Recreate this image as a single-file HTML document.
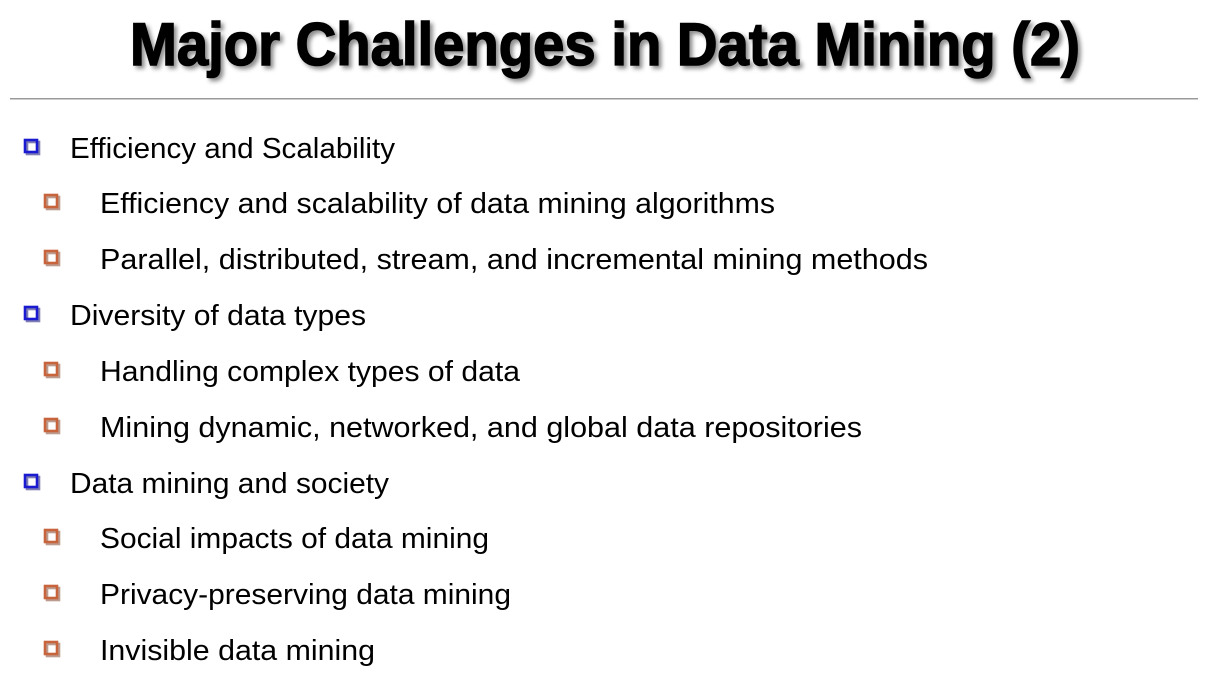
<!DOCTYPE html>
<html><head><meta charset="utf-8"><style>
html,body{margin:0;padding:0;background:#fff;width:1206px;height:690px;overflow:hidden}
</style></head><body>
<svg width="1206" height="690" xmlns="http://www.w3.org/2000/svg">
<defs>
<filter id="sh" x="-10%" y="-10%" width="130%" height="140%"><feDropShadow dx="3" dy="3" stdDeviation="2" flood-color="#000" flood-opacity="0.45"/></filter>
</defs>
<text x="130" y="65" font-family="Liberation Sans, sans-serif" font-weight="bold" font-size="60" textLength="950" lengthAdjust="spacingAndGlyphs" fill="#000" filter="url(#sh)" stroke="#000" stroke-width="1.5">Major Challenges in Data Mining (2)</text>
<rect x="10" y="98" width="1188" height="1.5" fill="#9a9a9a"/>
<g fill="none" stroke-width="2.6">
<g stroke="#00006a" stroke-opacity="0.5">
<rect x="27" y="142" width="12" height="12"/><rect x="27" y="309" width="12" height="12"/><rect x="27" y="477" width="12" height="12"/>
</g>
<g stroke="#1a1ad0">
<rect x="25" y="140" width="12" height="12"/><rect x="25" y="307" width="12" height="12"/><rect x="25" y="475" width="12" height="12"/>
</g>
<g stroke="#7a3a20" stroke-opacity="0.5">
<rect x="47" y="197" width="12" height="12"/><rect x="47" y="253" width="12" height="12"/>
<rect x="47" y="365" width="12" height="12"/><rect x="47" y="421" width="12" height="12"/>
<rect x="47" y="532" width="12" height="12"/><rect x="47" y="588" width="12" height="12"/>
<rect x="47" y="644" width="12" height="12"/>
</g>
<g stroke="#c8643c">
<rect x="45" y="195" width="12" height="12"/><rect x="45" y="251" width="12" height="12"/>
<rect x="45" y="363" width="12" height="12"/><rect x="45" y="419" width="12" height="12"/>
<rect x="45" y="530" width="12" height="12"/><rect x="45" y="586" width="12" height="12"/>
<rect x="45" y="642" width="12" height="12"/>
</g>
</g>
<g font-family="Liberation Sans, sans-serif" font-size="29" fill="#000">
<text x="70" y="158" textLength="325" lengthAdjust="spacingAndGlyphs">Efficiency and Scalability</text>
<text x="100" y="213" textLength="675" lengthAdjust="spacingAndGlyphs">Efficiency and scalability of data mining algorithms</text>
<text x="100" y="269" textLength="828" lengthAdjust="spacingAndGlyphs">Parallel, distributed, stream, and incremental mining methods</text>
<text x="70" y="325" textLength="296" lengthAdjust="spacingAndGlyphs">Diversity of data types</text>
<text x="100" y="381" textLength="420" lengthAdjust="spacingAndGlyphs">Handling complex types of data</text>
<text x="100" y="437" textLength="762" lengthAdjust="spacingAndGlyphs">Mining dynamic, networked, and global data repositories</text>
<text x="70" y="493" textLength="319" lengthAdjust="spacingAndGlyphs">Data mining and society</text>
<text x="100" y="548" textLength="389" lengthAdjust="spacingAndGlyphs">Social impacts of data mining</text>
<text x="100" y="604" textLength="411" lengthAdjust="spacingAndGlyphs">Privacy-preserving data mining</text>
<text x="100" y="660" textLength="275" lengthAdjust="spacingAndGlyphs">Invisible data mining</text>
</g>
</svg>
</body></html>
